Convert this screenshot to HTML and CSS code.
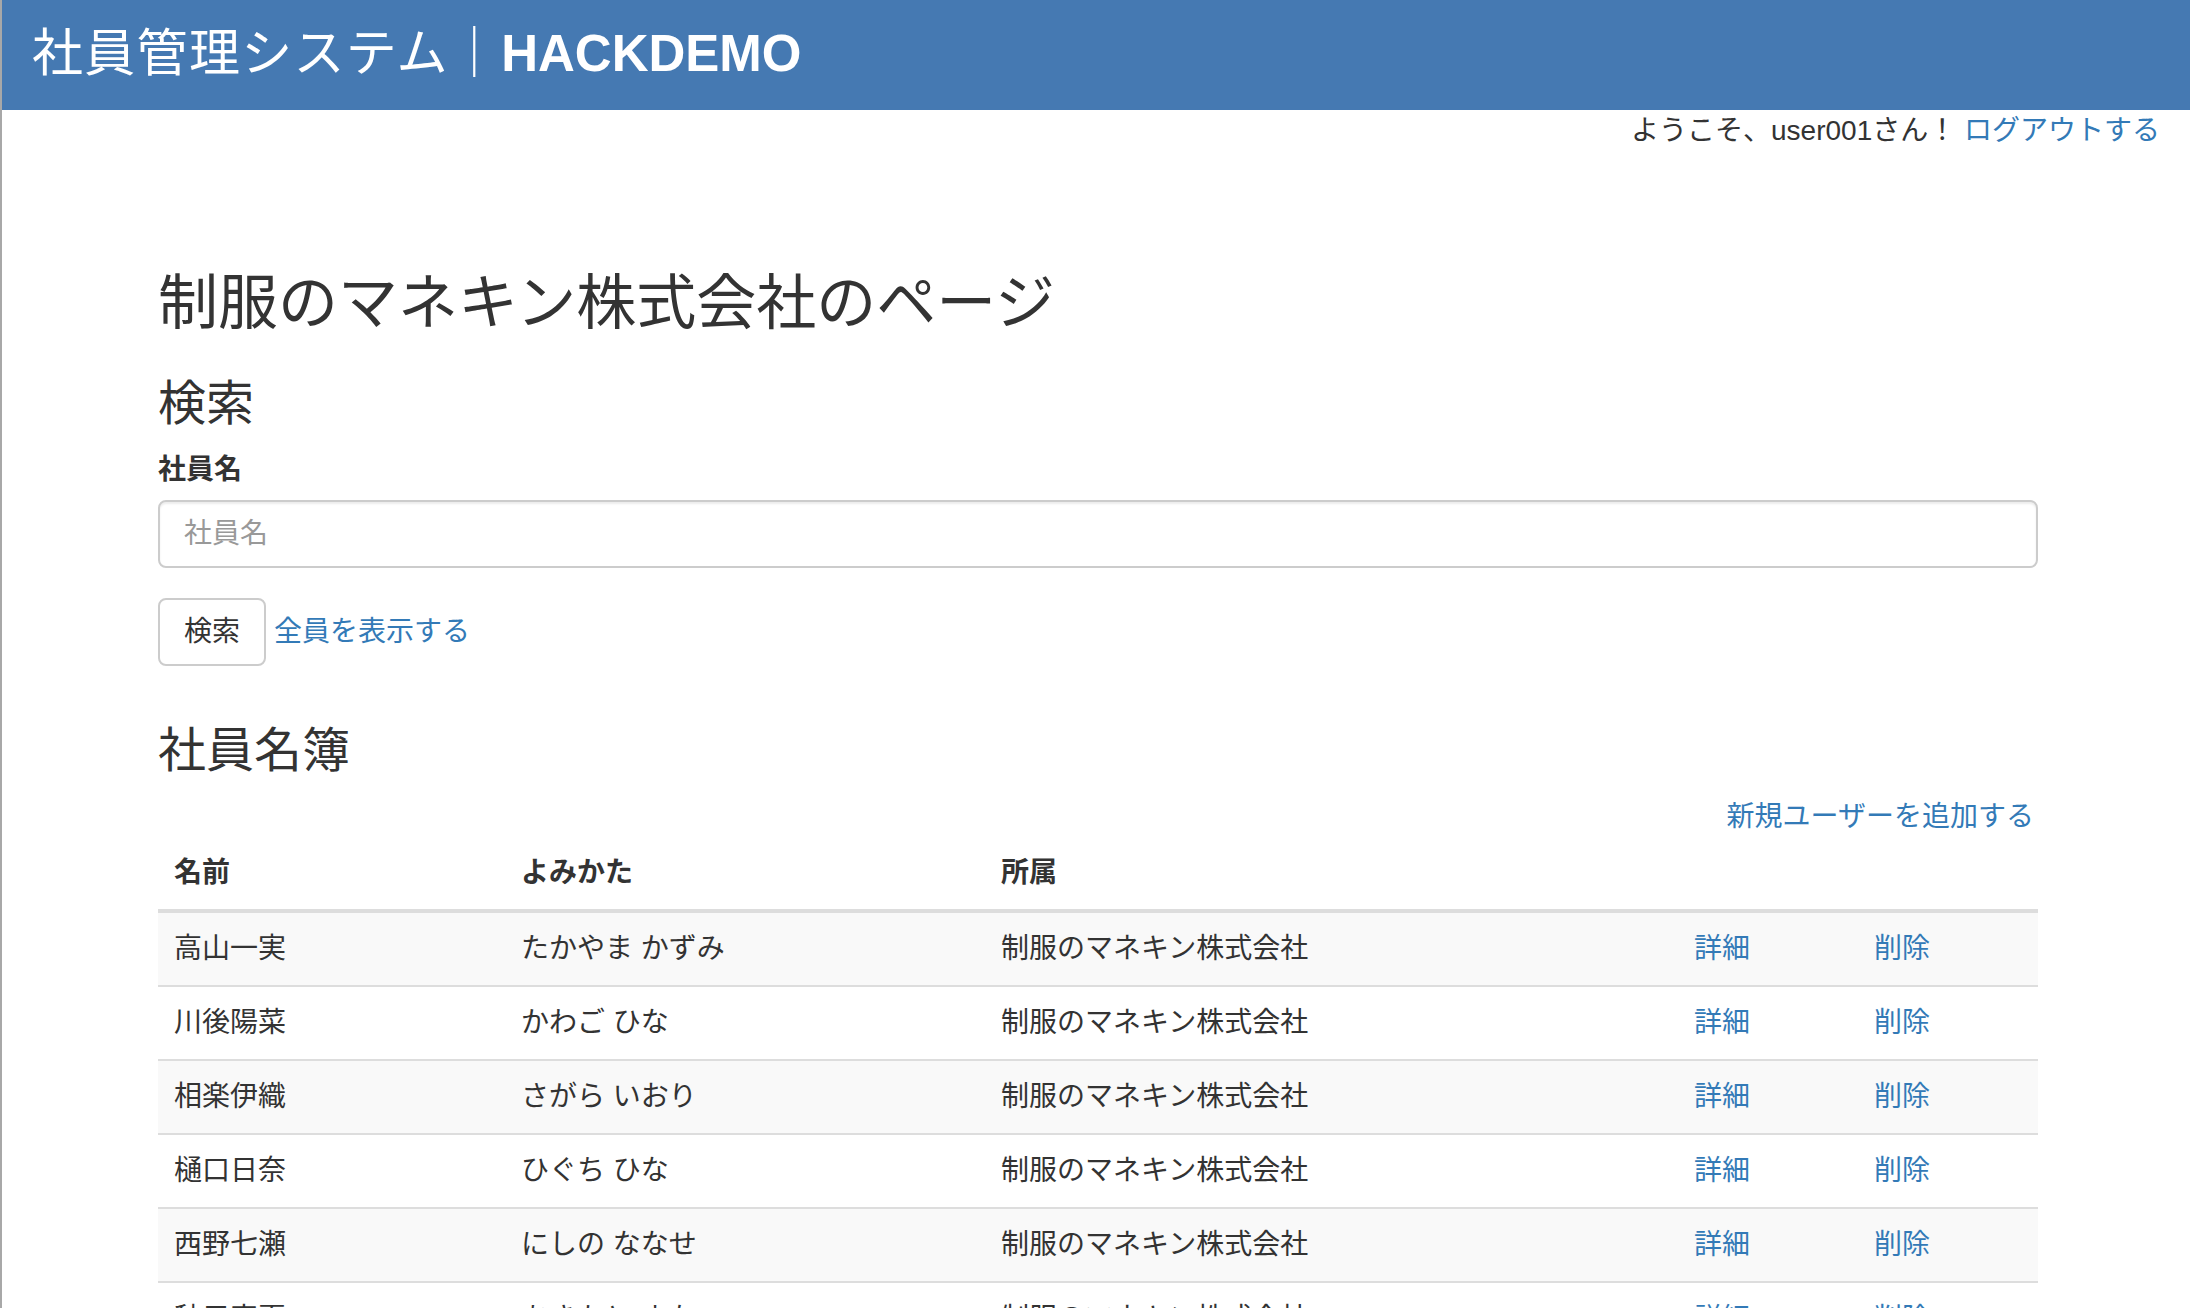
FILE: index.html
```html
<!DOCTYPE html>
<html lang="ja">
<head>
<meta charset="utf-8">
<title>社員管理システム｜HACKDEMO</title>
<link rel="stylesheet" href="styles.css">
</head>
<body>
<nav class="navbar">
  <span class="brand"><span class="brand-jp">社員管理システム｜</span><b class="brand-strong">HACKDEMO</b></span>
</nav>
<div class="welcome">ようこそ、user001さん！ <a href="#" class="link">ログアウトする</a></div>
<main class="container">
  <h2 class="page-title">制服のマネキン株式会社のページ</h2>
  <h3 class="section-title">検索</h3>
  <form class="search-form">
    <div class="form-group">
      <label class="form-label" for="name">社員名</label>
      <input class="form-control" id="name" type="text" placeholder="社員名">
    </div>
    <div class="form-actions">
      <button type="button" class="btn">検索</button>
      <a href="#" class="link">全員を表示する</a>
    </div>
  </form>
  <h3 class="section-title">社員名簿</h3>
  <div class="add-row"><a href="#" class="link">新規ユーザーを追加する</a></div>
  <table class="table">
    <colgroup>
      <col class="col-name"><col class="col-kana"><col class="col-dept"><col class="col-act"><col class="col-act">
    </colgroup>
    <thead>
      <tr><th>名前</th><th>よみかた</th><th>所属</th><th></th><th></th></tr>
    </thead>
    <tbody>
      <tr><td>高山一実</td><td>たかやま かずみ</td><td>制服のマネキン株式会社</td><td><a href="#" class="link">詳細</a></td><td><a href="#" class="link">削除</a></td></tr>
      <tr><td>川後陽菜</td><td>かわご ひな</td><td>制服のマネキン株式会社</td><td><a href="#" class="link">詳細</a></td><td><a href="#" class="link">削除</a></td></tr>
      <tr><td>相楽伊織</td><td>さがら いおり</td><td>制服のマネキン株式会社</td><td><a href="#" class="link">詳細</a></td><td><a href="#" class="link">削除</a></td></tr>
      <tr><td>樋口日奈</td><td>ひぐち ひな</td><td>制服のマネキン株式会社</td><td><a href="#" class="link">詳細</a></td><td><a href="#" class="link">削除</a></td></tr>
      <tr><td>西野七瀬</td><td>にしの ななせ</td><td>制服のマネキン株式会社</td><td><a href="#" class="link">詳細</a></td><td><a href="#" class="link">削除</a></td></tr>
      <tr><td>秋元真夏</td><td>あきもと まなつ</td><td>制服のマネキン株式会社</td><td><a href="#" class="link">詳細</a></td><td><a href="#" class="link">削除</a></td></tr>
      <tr><td>生田絵梨花</td><td>いくた えりか</td><td>制服のマネキン株式会社</td><td><a href="#" class="link">詳細</a></td><td><a href="#" class="link">削除</a></td></tr>
    </tbody>
  </table>
</main>
</body>
</html>
```
FILE: styles.css
```css
html, body {
  margin: 0;
  padding: 0;
}
body {
  border-left: 2px solid #a8a8a8;
  min-height: 100vh;
  box-sizing: border-box;
  background: #fff;
  color: #333;
  font-family: "Liberation Sans", "Noto Sans CJK JP", sans-serif;
  font-size: 28px;
  line-height: 40px;
}
.navbar {
  height: 110px;
  background: #4579b2;
  display: flex;
  align-items: center;
  padding-left: 30px;
  color: #fff;
}
.brand {
  font-size: 51px;
  line-height: 60px;
  margin-top: -2px;
  white-space: nowrap;
}
.brand-jp {
  letter-spacing: 1.3px;
}
.brand-strong {
  font-weight: 700;
}
.welcome {
  text-align: right;
  padding-right: 30px;
  height: 40px;
  margin-top: 1px;
}
.link {
  color: #337ab7;
  text-decoration: none;
}
.container {
  margin: 0 152px 0 156px;
}
.page-title {
  font-size: 60px;
  font-weight: 400;
  line-height: 66px;
  margin: 120px 0 20px;
}
.section-title {
  font-size: 48px;
  font-weight: 400;
  line-height: 53px;
  margin: 40px 0 20px;
}
.search-form {
  margin: 0;
  padding-bottom: 18px;
}
.form-group {
  margin-bottom: 30px;
}
.form-label {
  display: block;
  font-weight: 700;
  margin-bottom: 10px;
}
.form-control {
  display: block;
  width: 100%;
  box-sizing: border-box;
  height: 68px;
  padding: 12px 24px;
  font: inherit;
  color: #555;
  border: 2px solid #ccc;
  border-radius: 8px;
  box-shadow: inset 0 2px 2px rgba(0,0,0,.075);
  outline: none;
}
.form-control::placeholder {
  color: #999;
}
.form-actions {
  display: flex;
  align-items: center;
  gap: 8px;
}
.btn {
  height: 68px;
  padding: 12px 24px;
  font: inherit;
  color: #333;
  background: #fff;
  border: 2px solid #ccc;
  border-radius: 8px;
}
.add-row {
  text-align: right;
  padding-right: 4px;
}
.table {
  width: 100%;
  border-collapse: collapse;
  table-layout: fixed;
}
.col-name { width: 347px; }
.col-kana { width: 480px; }
.col-dept { width: 693px; }
.col-act { width: 180px; }
.table th,
.table td {
  text-align: left;
  padding: 16px;
  line-height: 40px;
  vertical-align: top;
  white-space: nowrap;
}
.table th {
  font-weight: 700;
  border-bottom: 4px solid #ddd;
}
.table td {
  border-top: 2px solid #ddd;
}
.table tbody tr:nth-child(odd) {
  background: #f9f9f9;
}
```
